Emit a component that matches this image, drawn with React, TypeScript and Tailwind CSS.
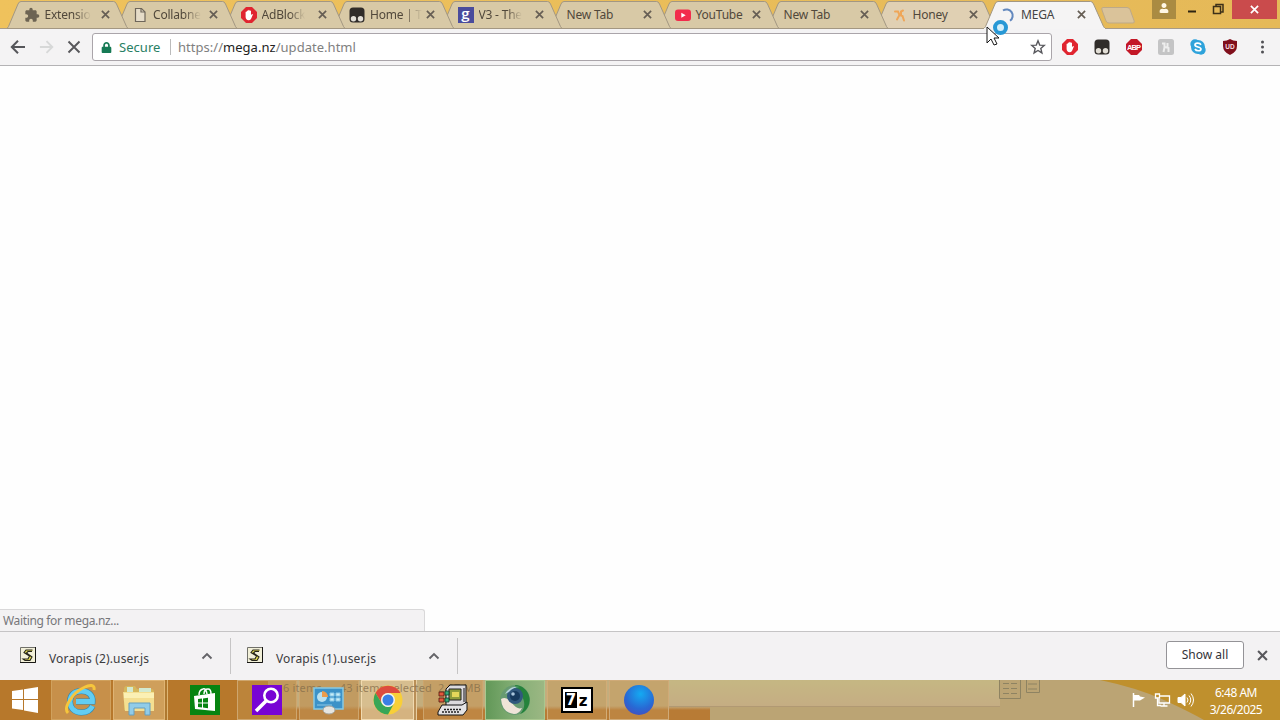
import React from 'react';
import { FaLock, FaUser } from 'react-icons/fa';
import { MdExtension } from 'react-icons/md';

const PITCH = 108.5;

const Hand = ({ size = 16 }: { size?: number }) => (
  <svg width={size} height={size} viewBox="0 0 16 16">
    <path d="M5 0h6l5 5v6l-5 5H5l-5-5V5z" fill="#e02530" />
    <path d="M4.6 8V5q.6-.8 1.2 0V4q.7-.9 1.4 0v-.8q.8-.8 1.4 0V4q.8-.8 1.4 0v4l1.2-1q1 0 .5 1L10 12q-1 1.2-2.4 1.2Q4.8 13 4.6 10z" fill="#fff" />
  </svg>
);

const Tamper = () => (
  <svg width="16" height="16" viewBox="0 0 16 16">
    <rect x="0.5" y="0.5" width="15" height="15" rx="3.5" fill="#302c29" />
    <circle cx="4.5" cy="11.7" r="2.7" fill="#e2ded6" />
    <circle cx="11.5" cy="11.7" r="2.7" fill="#e2ded6" />
  </svg>
);

const PageIcon = () => (
  <svg width="16" height="16" viewBox="0 0 16 16" fill="none" stroke="#6e665a" strokeWidth="1.2">
    <path d="M3.5 1.5h6L13 5v9.5H3.5z" fill="#e6dcc8" />
    <path d="M9 1.5V5h4" />
  </svg>
);

const GoogleIcon = () => (
  <div className="flex h-4 w-4 items-center justify-center bg-[#4a4c9c] font-['Open_Sans',sans-serif] text-[15px] leading-none font-semibold text-white">
    <span className="-mt-1">g</span>
  </div>
);

const YouTubeIcon = () => (
  <svg width="16" height="16" viewBox="0 0 16 16">
    <rect y="2.5" width="16" height="11.5" rx="3" fill="#f22c4c" />
    <path d="M6.3 5.7v5l4.4-2.5z" fill="#fff" />
  </svg>
);

const HoneyIcon = () => (
  <svg width="16" height="16" viewBox="0 0 16 16" fill="none" stroke="#efa658" strokeLinecap="round" strokeWidth="2">
    <path d="M3 4.500h3l1.500 3.500L5 12.500M7.500 8l3 1 1.500 4.500M9 8.500V4.500L11 3.500" />
  </svg>
);

const Spinner = () => (
  <svg width="16" height="16" viewBox="0 0 16 16" fill="none" stroke="#6288be" strokeWidth="2">
    <path d="M3 3.5A6 6 0 1 1 10 13.7" />
  </svg>
);

const Cross = ({ size = 9, color = '#665e54' }: { size?: number; color?: string }) => (
  <svg width={size} height={size} viewBox="0 0 10 10" stroke={color} strokeWidth="1.9">
    <path d="M1 1l8 8M9 1L1 9" />
  </svg>
);

const tabs = [
  { title: 'Extensio', icon: <MdExtension size={16} color="#6d6453" /> },
  { title: 'Collabne', icon: <PageIcon /> },
  { title: 'AdBlock', icon: <Hand /> },
  { title: 'Home | T', icon: <Tamper /> },
  { title: 'V3 - The', icon: <GoogleIcon /> },
  { title: 'New Tab', icon: null },
  { title: 'YouTube', icon: <YouTubeIcon /> },
  { title: 'New Tab', icon: null },
  { title: 'Honey', icon: <HoneyIcon /> },
  { title: 'MEGA', icon: <Spinner />, active: true },
];

const TabStrip = () => (
  <div className="relative flex h-[29px] shrink-0 justify-between bg-gradient-to-r from-[#efc25c] to-[#e5b958] pl-[7px]">
    <div className="flex">
      {tabs.map((tab, i) => (
        <div key={i} className="relative h-[29px]" style={{ width: PITCH, zIndex: tab.active ? 20 : 10 - i }}>
          <svg className="absolute top-0 left-0" width="121" height="29" viewBox="0 0 121 29">
            <path d="M0 28.5 1.500 26.500 11 4Q12 1.500 14 1.500H106.500Q108.500 1.500 109.500 4L119.500 26.500 121 28.5z" fill={tab.active ? '#f5f4f4' : i === 8 ? '#e0d0b3' : '#d8c9a6'} stroke="#a39782" />
            {tab.active && <path d="M0 28.5h121" stroke="#f5f4f4" />}
          </svg>
          <div className={`relative flex h-[29px] items-center pt-px ${tab.icon ? 'pl-[16.5px]' : 'pl-[17px]'}`}>
            {tab.icon && <span className="mr-[5px] flex w-4 shrink-0 justify-center">{tab.icon}</span>}
            <span className={`text-[12px] tracking-[-0.2px] whitespace-nowrap ${i < 5 ? '[mask-image:linear-gradient(to_right,black_65%,transparent)]' : ''} ${tab.active ? 'text-[#444]' : 'text-[#51483b]'}`}>
              {tab.title}
            </span>
          </div>
          <span className="absolute top-[10px] left-[93.5px] flex"><Cross /></span>
        </div>
      ))}
      <svg className="ml-[7.5px]" width="36" height="28" viewBox="0 0 36 28">
        <path d="M3 7.5h24q2 0 3 2l4 11q1 2.500-1 2.500H9q-2 0-3-2L2 10Q1 7.500 3 7.500z" fill="#dac39a" stroke="#bda988" />
      </svg>
    </div>
    <div className="flex h-[19px]">
      <div className="flex w-6 items-center justify-center bg-[#aa8b42] pb-1"><FaUser size={10} color="#fff7e5" /></div>
      <svg width="32" height="19" viewBox="0 0 32 19"><path d="M12 11.500h8" stroke="#2e2412" strokeWidth="2" /></svg>
      <svg width="24" height="19" viewBox="0 0 24 19" fill="none" stroke="#3d3018" strokeWidth="1.500">
        <path d="M5.500 6.500h7v7h-7zM8 6V4.500h7V12h-2" />
      </svg>
      <div className="mr-[3px] flex w-[45px] items-center justify-center bg-[#ca4b4c]"><Cross size={9} color="#fff" /></div>
    </div>
    <div className="absolute bottom-0 left-0 h-px w-[984px] bg-[#a79b89]" />
    <div className="absolute right-0 bottom-0 h-px w-[176px] bg-[#a79b89]" />
  </div>
);

const Toolbar = () => (
  <div className="flex h-[37px] shrink-0 items-center border-b border-[#b4b3b5] bg-[#f4f3f4] text-[13px]">
    <svg className="ml-[10px]" width="16" height="16" viewBox="0 0 16 16" fill="none" stroke="#55565a" strokeWidth="2">
      <path d="M15 8H2M8 1.800 1.800 8 8 14.200" />
    </svg>
    <svg className="ml-[13px]" width="15" height="16" viewBox="0 0 16 16" fill="none" stroke="#d7d8d8" strokeWidth="2">
      <path d="M1 8h13M8 1.800 14.200 8 8 14.200" />
    </svg>
    <svg className="ml-[13px]" width="14" height="14" viewBox="0 0 14 14" stroke="#57575a" strokeWidth="1.900">
      <path d="M1.500 1.500l11 11M12.500 1.500l-11 11" />
    </svg>
    <div className="ml-[11px] flex h-[28px] w-[960px] items-center rounded-[3px] border border-[#aaa5aa] bg-white pl-[8px]">
      <FaLock size={11} color="#167a55" />
      <span className="ml-[7px] w-[51px] pt-px tracking-[0.05px] whitespace-nowrap text-[#288064]">Secure</span>
      <span className="h-4 w-px bg-[#bbb]" />
      <span className="ml-[7px] pt-px tracking-[0.03px] whitespace-nowrap text-[#808080]">https://<span className="text-[#222]">mega.nz</span>/update.html</span>
      <svg className="mr-[5px] ml-auto" width="16" height="16" viewBox="0 0 16 16" fill="none" stroke="#58585d" strokeWidth="1.400">
        <path d="M8 1.800l1.700 4.300 4.600.3-3.500 3 1.100 4.500L8 11.500l-3.900 2.400 1.100-4.500-3.500-3 4.600-.3z" />
      </svg>
    </div>
    <div className="ml-[10px] flex items-center gap-4">
      <Hand />
      <Tamper />
      <svg width="16" height="16" viewBox="0 0 16 16">
        <path d="M5 0h6l5 5v6l-5 5H5l-5-5V5z" fill="#c31726" />
        <text x="8" y="10.800" textAnchor="middle" fontSize="7.500" fontWeight="700" fontFamily="Liberation Sans, sans-serif" textLength="14" fill="#fff">ABP</text>
      </svg>
      <svg width="16" height="16" viewBox="0 0 16 16">
        <rect width="16" height="16" rx="2.500" fill="#c4c4c5" />
        <path d="M4 4.500h2.500v4L5.500 13M7 8l3.500 1v4M9.500 9V4" stroke="#eee" strokeWidth="2" fill="none" />
      </svg>
      <svg width="16" height="16" viewBox="0 0 16 16">
        <circle cx="5" cy="5" r="4.700" fill="#2fa3db" /><circle cx="11" cy="11" r="4.700" fill="#2fa3db" /><circle cx="8" cy="8" r="7" fill="#2fa3db" />
        <path d="M11 5.800C9.500 3.400 5 3.800 5 6c0 2.600 6 1.400 6 4 0 2.200-4.600 2.500-6 0" fill="none" stroke="#fff" strokeWidth="1.700" />
      </svg>
      <svg width="16" height="16" viewBox="0 0 16 16">
        <path d="M8 0q3 2 7 2v5q0 6-7 9-7-3-7-9V2q4 0 7-2z" fill="#800f1c" />
        <text x="8" y="9.800" textAnchor="middle" fontSize="6.500" fontWeight="700" fontFamily="Liberation Sans, sans-serif" fill="#f5dfe0">UD</text>
      </svg>
      <svg width="16" height="16" viewBox="0 0 16 16" fill="#4f4f53">
        <circle cx="8.500" cy="3" r="1.500" /><circle cx="8.500" cy="8" r="1.500" /><circle cx="8.500" cy="13" r="1.500" />
      </svg>
    </div>
  </div>
);

const Script = () => (
  <svg className="-mt-[3px] shrink-0" width="16" height="16" viewBox="0 0 16 16">
    <path d="M.5.500h15v15H.5z" fill="#f2f0d8" stroke="#71716a" />
    <path d="M0 15.500h15.500V0" fill="none" stroke="#171714" />
    <path d="M12.500 3H6L4 5.500 9.500 9 8 12H3l2 1.500h5l2-3.500-5.500-4L8 4.500h4" fill="#e5dd52" stroke="#26251b" strokeWidth="1.100" />
  </svg>
);

const Download = ({ name }: { name: string }) => (
  <div className="flex h-9 w-[227px] items-center border-r border-[#c6c5c5] pl-4">
    <Script />
    <span className="ml-[13px] w-[152px] pt-[5px] text-[12px] tracking-[0.15px] text-[#3c3c40]">{name}</span>
    <svg width="12" height="8" viewBox="0 0 12 8" fill="none" stroke="#646468" strokeWidth="1.900"><path d="M1.500 6.500 6 2l4.500 4.500" /></svg>
  </div>
);

const IE = () => (
  <svg width="34" height="34" viewBox="0 0 34 34" fill="none">
    <path d="M28.500 23c-2 4.500-6 6.500-11 6.500C10 29.500 6 24.500 6 18.500S10 8 17.500 8 29 13 28.500 18.500H12" stroke="#2b86b4" strokeWidth="6" />
    <path d="M28.500 23c-2 4.500-6 6.500-11 6.500C10 29.500 6 24.500 6 18.500S10 8 17.500 8 29 13 28.500 18.500H12" stroke="#62cdf2" strokeWidth="4.800" />
    <path d="M4 30C-1 25 8 10 20 4.500c6-3 11-3 10 2.500" stroke="#f6c63c" strokeWidth="3" />
  </svg>
);

const Explorer = () => (
  <svg width="34" height="32" viewBox="0 0 34 32">
    <path d="M2 5q0-3 3-3h8l2 3h14q3 0 3 3v18H2z" fill="#d5b75c" />
    <path d="M5 3h6v5H5zM17 4h12v5H17z" fill="#d3ead1" />
    <path d="M1 8h31v19H3z" fill="#f4df91" />
    <path d="M2 9h30v5H2z" fill="#fbf0b4" />
    <path d="M7 31V19h21v12h-5v-7H12v7z" fill="#91cce8" stroke="#659fbf" />
  </svg>
);

const Store = () => (
  <svg width="30" height="30" viewBox="0 0 30 30">
    <path d="M0 0h30v30H0z" fill="#078411" />
    <path d="M4 11 25 8v18L5 24z" fill="#fff" />
    <path d="M9 10q0-5 4-6 3-1 4 5M14 9q0-5 4-5 3 0 3 5" fill="none" stroke="#fff" strokeWidth="1.500" />
    <path d="M8 14l4-.5v4H8zM13 13.400l5-.6v4.700h-5zM8 18.500h4v4l-4-.5zM13 18.500h5v4.700l-5-.6z" fill="#078411" />
  </svg>
);

const Magnifier = () => (
  <svg width="30" height="30" viewBox="0 0 30 30" fill="none" stroke="#fff">
    <path d="M0 0h30v30H0z" fill="#7804d4" stroke="none" />
    <circle cx="19" cy="10.500" r="6.700" strokeWidth="2.600" />
    <path d="M14 16 4 26" strokeWidth="3.500" />
  </svg>
);

const ControlPanel = () => (
  <svg width="34" height="30" viewBox="0 0 34 30">
    <path d="M2 3h29v21H2z" fill="#3c92c8" stroke="#85c9e3" strokeWidth="1.500" />
    <circle cx="10" cy="12" r="5" fill="#b9e0ef" /><path d="M10 12V6a6 6 0 0 1 6 6z" fill="#ec9c4b" />
    <path d="M18 8h4v3h-4zM24 8h4v3h-4zM18 13h4v3h-4zM24 13h4v3h-4zM5 20h15" fill="#c9edf6" stroke="#8bc9e8" />
    <ellipse cx="17" cy="25" rx="6" ry="4" fill="#e6e5e0" stroke="#a4a29a" />
  </svg>
);

const Chrome = () => (
  <svg width="30" height="30" viewBox="0 0 30 30">
    <circle cx="15" cy="15" r="14.500" fill="#f8cf38" />
    <path d="M2.400 8A14.500 14.500 0 0 1 27.600 8H15a7 7 0 0 0-6 10.500z" fill="#dd4b3e" />
    <path d="M2.400 8A14.500 14.500 0 0 0 15 29.500l6-11a7 7 0 0 1-12 0z" fill="#38a657" />
    <circle cx="15" cy="15" r="7" fill="#f2f3f3" /><circle cx="15" cy="15" r="5.500" fill="#3b7fe4" />
  </svg>
);

const OldComputer = () => (
  <svg width="32" height="32" viewBox="0 0 32 32">
    <path d="M9 5l4-4h16v17l-3 4H9z" fill="#dcdadd" stroke="#111" />
    <path d="M12 5h12v11H12z" fill="#8d9c3c" stroke="#222" />
    <path d="M15 8h7v5h-7z" fill="#e4d75a" />
    <path d="M27 4v14" stroke="#77757a" strokeWidth="2" />
    <path d="M5 21h20l5-3v8l-4 5H1v-3z" fill="#e4e3e4" stroke="#111" />
    <path d="M5 28h17M7 25.500h17" stroke="#222" strokeWidth="1.500" strokeDasharray="2 1" />
    <path d="M2 8h5v4H2zM2 14h5v4H2z" fill="#e2583c" stroke="#52170d" strokeWidth="0.800" />
    <path d="M8 7h4v4H8zM8 14h4v4H8z" fill="#35a978" stroke="#0f3b2b" strokeWidth="0.800" />
  </svg>
);

const Eye = () => (
  <svg width="32" height="32" viewBox="0 0 32 32">
    <circle cx="16" cy="16" r="15" fill="#679b71" />
    <path d="M16 1a15 15 0 0 1 5 29c7-7 5-17-3-23z" fill="#25833b" />
    <path d="M2 15q6-3 11 4t10 5q-3 6-8 6Q3 29 2 15z" fill="#efe4d8" />
    <circle cx="16" cy="12" r="8" fill="#31597d" /><circle cx="16" cy="12" r="5" fill="#163a5d" />
    <circle cx="14" cy="10" r="1.800" fill="#a9c6dc" />
    <path d="M6 10q5-9 15-7-7 0-11 5" fill="#b3d2dd" />
  </svg>
);

const SevenZip = () => (
  <div className="flex h-[26px] w-[32px] items-center justify-center border-[2px] border-black bg-white font-['DejaVu_Sans',sans-serif] text-[15px] leading-none font-bold">
    <span className="flex h-[16px] w-3 items-center justify-center bg-black text-white">7</span>
    <span className="w-3 pt-0.5 text-center text-black">z</span>
  </div>
);

const apps = [
  { icon: <IE />, box: 'ml-[1px] w-[60px] border-[#d0a15d] bg-[#c7904a]' },
  { icon: <Explorer />, box: 'ml-[2px] w-[52px] border-[#dfb474] bg-[#cf9f5b] shadow-[2px_0_#af7930,3px_0_#ddb574]' },
  { icon: <Store />, box: 'ml-[11px] w-[58px] border-transparent' },
  { icon: <Magnifier />, box: 'ml-[3px] w-[60px] border-[#cea66e] bg-[#bf8c45]/60' },
  { icon: <ControlPanel />, box: 'ml-[2px] w-[60px] border-[#cea66e] bg-[#c0904e]/60' },
  { icon: <Chrome />, box: 'ml-[2px] w-[53px] border-[#f1dab0] bg-[#dcc294]/80 shadow-[2px_0_#b98f57,3px_0_#e7cda0]' },
  { icon: <OldComputer />, box: 'ml-[9px] w-[60px] border-[#cda46b] bg-[#c59150]/50' },
  { icon: <Eye />, box: 'ml-[2px] w-[60px] border-[#a8c78f] bg-gradient-to-r from-[#629858] via-[#83ae75] to-[#9bb783]' },
  { icon: <SevenZip />, box: 'ml-[2px] w-[60px] border-[#d2ac76] bg-[#c49554]/40' },
  { icon: <div className="h-[30px] w-[30px] rounded-full bg-[radial-gradient(circle_at_55%_30%,#14aaf2,#2869d4_55%,#5440b5)]" />, box: 'ml-[2px] w-[60px] border-[#cfaa78] bg-[#c59754]/40' },
];

const Taskbar = () => (
  <div className="relative flex h-10 shrink-0 overflow-hidden bg-[#b7782b]">
    {/* desktop and explorer window showing through the glass */}
    <div className="absolute inset-y-0 left-[268px] w-[442px] bg-gradient-to-b from-[#c3ad7d] from-65% to-[#b87b35] to-75%" />
    <div className="absolute inset-y-0 right-0 left-[710px] bg-[#bba474]" />
    <div className="absolute top-0 left-[668px] h-[27px] w-[332px] border-b border-[#b19973] bg-gradient-to-b from-[#c5b783] to-[#c5ad83]" />
    <svg className="absolute top-0 right-0" width="180" height="40"><path d="M0 0H180V40H104Q90 32 64 20T0 0z" fill="#bf902d" /></svg>
    <svg className="absolute top-0 left-[999px]" width="45" height="20" fill="none" stroke="#8e8362">
      <path d="M.5 0v18.500h21V0M4 3.500h6M12 3.500h6M4 8.500h6M12 8.500h6M4 13.500h6M12 13.500h6" /><path d="M27.500 0v12.500h13V0M29 4h9M29 9h9" />
    </svg>
    <div className="relative flex w-[50px] items-center justify-center">
      <svg width="28" height="26" viewBox="0 0 28 26" fill="#fff"><path d="M1 4l11-1.500V12H1zM13 2.300 27 0v12H13zM1 13h11v10L1 21.500zM13 13h14v13l-14-2.500z" /></svg>
    </div>
    {apps.map((app, i) => (
      <div key={i} className={`relative flex h-10 shrink-0 items-center justify-center border ${app.box}`}>
        <span className="relative z-10">{app.icon}</span>
      </div>
    ))}
    <span className="absolute top-0 left-[283px] text-[11px] tracking-[0.15px] whitespace-pre text-[#876f4b]/80">6 items      43 items selected  2.97 MB</span>
    <div className="relative mr-4 ml-auto flex items-center text-white">
      <svg width="16" height="16" viewBox="0 0 16 16"><path d="M3.500 1v14" stroke="#fff" strokeWidth="1.500" /><path d="M4 3h5l1 1.500 5 1-5 3H4z" fill="#fff" /></svg>
      <svg className="ml-2" width="17" height="16" viewBox="0 0 17 16" fill="none" stroke="#fff" strokeWidth="1.300"><path d="M6 4h9.500v7H5V7M10 11v3M6.500 14h7M1.500 2h4v4h-4zM3.500 6v7.500H7" /></svg>
      <svg className="ml-[6px]" width="17" height="16" viewBox="0 0 17 16" fill="none" stroke="#fff"><path d="M1 5.500h3L8 2v12l-4-3.500H1z" fill="#fff" /><path d="M10 5.500q2 2.500 0 5M12 3.500q3.500 4.500 0 9M14 1.500q5 6.500 0 13" /></svg>
      <div className="mt-px ml-[14px] w-[56px] text-center text-[12px] leading-[17px] tracking-[-0.5px] whitespace-nowrap">
        <div>6:48 AM</div>
        <div>3/26/2025</div>
      </div>
    </div>
  </div>
);

export default function App() {
  return (
    <div className="relative flex h-[720px] w-[1280px] flex-col overflow-hidden bg-white font-['Noto_Sans','Open_Sans',sans-serif]">
      <TabStrip />
      <Toolbar />
      <main className="flex flex-1 items-end bg-[#fefefe]">
        <div className="flex h-[22px] w-[425px] items-center rounded-tr-[3px] border-t border-r border-[#d9d8d9] bg-[#f3f2f3] pl-[3px] text-[12px] tracking-[-0.35px] text-[#77777a]">Waiting for mega.nz...</div>
      </main>
      <div className="flex h-[49px] shrink-0 items-center border-t border-[#c5c4c5] bg-[#f3f2f3]">
        <div className="flex pl-1">
          <Download name="Vorapis (2).user.js" />
          <Download name="Vorapis (1).user.js" />
        </div>
        <button className="-mt-0.5 ml-auto h-7 w-[78px] rounded-[3px] border border-[#949397] bg-white text-[12px] text-[#333338]">Show all</button>
        <div className="-mt-0.5 mr-[12px] ml-[13px] flex"><Cross size={11} color="#58585c" /></div>
      </div>
      <Taskbar />
      <svg className="absolute top-[18px] left-[985px] z-30" width="26" height="30" viewBox="0 0 26 30">
        <circle cx="15.500" cy="9.500" r="5.500" fill="#d5effa" stroke="#2798d5" strokeWidth="4" />
        <path d="M2 9v16l4-4 3 6 3-1-3-6h5z" fill="#fff" stroke="#171717" />
      </svg>
    </div>
  );
}
